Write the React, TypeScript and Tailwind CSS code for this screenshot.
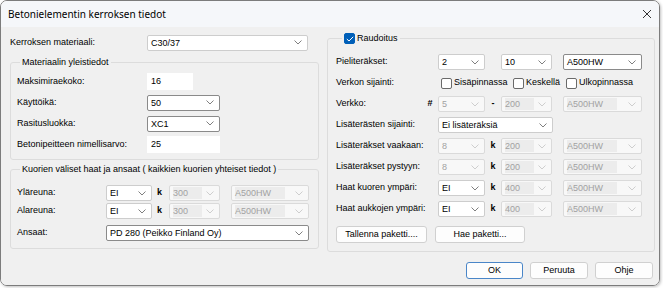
import type { ReactNode } from 'react'
import clsx from 'clsx'

function Chevron({ disabled }: { disabled?: boolean }) {
  return (
    <svg width="8" height="5" viewBox="0 0 8 5" className="shrink-0">
      <path
        d="M0.5 0.5 L4 4 L7.5 0.5"
        fill="none"
        stroke={disabled ? '#c8c8c8' : '#707070'}
        strokeWidth="0.9"
      />
    </svg>
  )
}

function Combo({
  value,
  w,
  disabled,
  strong,
  shade,
}: {
  value: string
  w: string
  disabled?: boolean
  strong?: boolean
  shade?: boolean
}) {
  return (
    <div
      className={clsx(
        'flex h-[16px] shrink-0 items-center justify-between rounded-[2px] border pl-[3px] pr-[5px]',
        w,
        disabled
          ? 'border-[#dadada] bg-[#f8f8f8] text-[#a2a2a2]'
          : strong
            ? 'border-[#8a8a8a] bg-white text-black'
            : 'border-[#cdcdcd] bg-white text-black',
      )}
    >
      <span className={clsx('whitespace-nowrap leading-[12px]', shade && 'bg-[#ececec] pr-[14px]')}>{value}</span>
      <Chevron disabled={disabled} />
    </div>
  )
}

function Edit({ value, w }: { value: string; w: string }) {
  return (
    <div className={clsx('flex h-[17px] shrink-0 items-center bg-white pl-[4px]', w)}>{value}</div>
  )
}

function Check({ checked, label, w }: { checked?: boolean; label: string; w?: string }) {
  return (
    <div className={clsx('flex items-center gap-[2px] whitespace-nowrap', w)}>
      <span
        className={clsx(
          'flex h-[11px] w-[11px] shrink-0 items-center justify-center rounded-[2px] border',
          checked ? 'border-[#005fb8] bg-[#005fb8]' : 'border-[#6a6a6a] bg-white',
        )}
      >
        {checked && (
          <svg width="8" height="6" viewBox="0 0 8 6">
            <path d="M0.8 3 L3 5 L7.2 0.8" fill="none" stroke="#fff" strokeWidth="1" />
          </svg>
        )}
      </span>
      <span>{label}</span>
    </div>
  )
}

function Group({
  legend,
  className,
  children,
}: {
  legend: ReactNode
  className?: string
  children: ReactNode
}) {
  return (
    <fieldset className={clsx('rounded-[3px] border border-[#dcdcdc]', className)}>
      <legend className="ml-[3px] whitespace-nowrap px-[2px] leading-[12px]">{legend}</legend>
      {children}
    </fieldset>
  )
}

function Btn({ children, w, primary }: { children: ReactNode; w: string; primary?: boolean }) {
  return (
    <div
      className={clsx(
        'flex h-[17px] items-center justify-center whitespace-nowrap rounded-[3px] bg-[#fdfdfd]',
        w,
        primary ? 'border-[1.5px] border-[#4a86c8]' : 'border border-[#d0d0d0]',
      )}
    >
      {children}
    </div>
  )
}

function RRow({ label, sym, children }: { label: string; sym?: string; children: ReactNode }) {
  return (
    <div className="flex h-[16px] items-center">
      <span className="w-[86px] shrink-0 whitespace-nowrap">{label}</span>
      <span className="w-[16px] shrink-0 text-center font-bold">{sym}</span>
      {children}
    </div>
  )
}

function Triple({
  a,
  b,
  c,
  sep,
  aOn,
}: {
  a: string
  b: string
  c: string
  sep: string
  aOn?: boolean
}) {
  return (
    <>
      <Combo value={a} w="w-[47px]" disabled={!aOn} />
      <span className="w-[16px] shrink-0 text-center font-bold">{sep}</span>
      <Combo value={b} w="w-[51px]" disabled shade />
      <Combo value={c} w="w-[79px] ml-[11px]" disabled shade />
    </>
  )
}

function LRow({ label, className }: { label: string; className?: string }) {
  return (
    <div className={clsx('flex h-[16px] items-center', className)}>
      <span className="w-[89px] shrink-0">{label}</span>
      <Combo value="EI" w="w-[46px]" />
      <span className="w-[17px] shrink-0 pl-[5px] font-bold">k</span>
      <Combo value="300" w="w-[51px]" disabled shade />
      <Combo value="A500HW" w="w-[78px] ml-[11px]" disabled shade />
    </div>
  )
}

export default function App() {
  return (
    <div className="h-[288px] w-[663px] bg-white font-['Liberation_Sans',Arial,sans-serif] text-[9px] text-black">
      <div className="flex h-[286px] w-[660px] flex-col overflow-hidden rounded-[7px] border border-[#7c7c7c] shadow-[1px_1px_3px_rgba(0,0,0,0.25)]">
        <div className="flex h-[26px] shrink-0 items-center justify-between bg-[#f5f7fa] pl-[7px] pr-[4px]">
          <span className="font-['Noto_Sans',sans-serif] text-[10px]">Betonielementin kerroksen tiedot</span>
          <svg width="10" height="10" viewBox="0 0 10 10" className="mr-[3px]">
            <path d="M1 1 L9 9 M9 1 L1 9" stroke="#333" strokeWidth="1" />
          </svg>
        </div>

        <div className="flex flex-1 flex-col bg-[#f0f0f0] pl-[9px]">
          <div className="flex gap-[8px]">
            {/* left column */}
            <div className="flex w-[309px] flex-col pt-[7px]">
              <div className="flex h-[17px] items-center">
                <span className="w-[137px] shrink-0">Kerroksen materiaali:</span>
                <Combo value="C30/37" w="w-[161px]" />
              </div>

              <Group legend="Materiaalin yleistiedot" className="mt-[5px] pb-[6px] pl-[6px] pt-[5px]">
                <div className="flex flex-col gap-[4px]">
                  <div className="flex h-[17px] items-center">
                    <span className="w-[130px] shrink-0">Maksimiraekoko:</span>
                    <Edit value="16" w="w-[46px]" />
                  </div>
                  <div className="flex h-[17px] items-center">
                    <span className="w-[130px] shrink-0">Käyttöikä:</span>
                    <Combo value="50" w="w-[73px]" strong />
                  </div>
                  <div className="flex h-[17px] items-center">
                    <span className="w-[130px] shrink-0">Rasitusluokka:</span>
                    <Combo value="XC1" w="w-[73px]" strong />
                  </div>
                  <div className="flex h-[17px] items-center">
                    <span className="w-[130px] shrink-0 whitespace-nowrap">Betonipeitteen nimellisarvo:</span>
                    <Edit value="25" w="w-[73px]" />
                  </div>
                </div>
              </Group>

              <Group
                legend="Kuorien väliset haat ja ansaat ( kaikkien kuorien yhteiset tiedot )"
                className="mt-[3px] pb-[7px] pl-[6px] pt-[10px]"
              >
                <div className="flex flex-col">
                  <LRow label="Yläreuna:" />
                  <LRow label="Alareuna:" className="mt-[2px]" />
                  <div className="mt-[6px] flex h-[16px] items-center">
                    <span className="w-[89px] shrink-0">Ansaat:</span>
                    <Combo value="PD 280 (Peikko Finland Oy)" w="w-[203px]" strong />
                  </div>
                </div>
              </Group>
            </div>

            {/* right column */}
            <div className="flex w-[328px] flex-col pt-[5px]">
              <fieldset className="rounded-[3px] border border-[#dcdcdc] pb-[8px] pl-[8px] pt-[9px]">
                <legend className="ml-[6px] px-[2px] leading-[13px]">
                  <Check checked label="Raudoitus" />
                </legend>
                <div className="flex flex-col gap-[5px]">
                  <RRow label="Pieliteräkset:">
                    <Combo value="2" w="w-[47px]" />
                    <span className="w-[16px] shrink-0" />
                    <Combo value="10" w="w-[51px]" />
                    <Combo value="A500HW" w="w-[79px] ml-[11px]" strong />
                  </RRow>
                  <RRow label="Verkon sijainti:">
                    <div className="ml-[3px] flex items-center">
                      <Check label="Sisäpinnassa" w="w-[72px]" />
                      <Check label="Keskellä" w="w-[53px]" />
                      <Check label="Ulkopinnassa" />
                    </div>
                  </RRow>
                  <RRow label="Verkko:" sym="#">
                    <Triple a="5" b="200" c="A500HW" sep="-" />
                  </RRow>
                  <RRow label="Lisäterästen sijainti:">
                    <Combo value="Ei lisäteräksiä" w="w-[115px]" />
                  </RRow>
                  <RRow label="Lisäteräkset vaakaan:">
                    <Triple a="8" b="200" c="A500HW" sep="k" />
                  </RRow>
                  <RRow label="Lisäteräkset pystyyn:">
                    <Triple a="8" b="200" c="A500HW" sep="k" />
                  </RRow>
                  <RRow label="Haat kuoren ympäri:">
                    <Triple a="EI" b="400" c="A500HW" sep="k" aOn />
                  </RRow>
                  <RRow label="Haat aukkojen ympäri:">
                    <Triple a="EI" b="400" c="A500HW" sep="k" aOn />
                  </RRow>
                  <div className="mt-[4px] flex gap-[8px]">
                    <Btn w="w-[91px]">Tallenna paketti....</Btn>
                    <Btn w="w-[90px]">Hae paketti...</Btn>
                  </div>
                </div>
              </fieldset>
            </div>
          </div>

          <div className="mr-[6px] mt-[10px] flex justify-end gap-[7px]">
            <Btn w="w-[57px]" primary>
              OK
            </Btn>
            <Btn w="w-[58px]">Peruuta</Btn>
            <Btn w="w-[58px]">Ohje</Btn>
          </div>
        </div>
      </div>
    </div>
  )
}
